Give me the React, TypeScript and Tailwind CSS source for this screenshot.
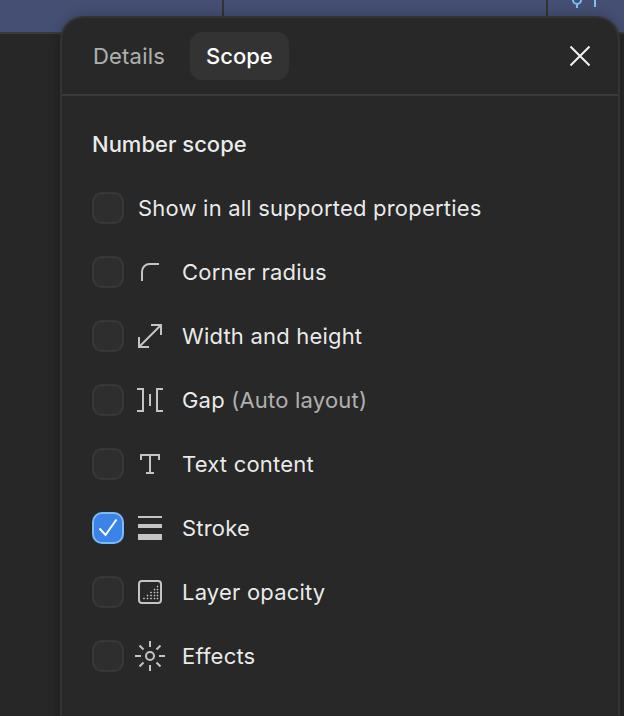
import React from "react";

const c = "#c4c4c4";
const Box = ({ children }: { children: React.ReactNode }) => (
  <svg width="32" height="32" viewBox="0 0 32 32" fill="none" className="shrink-0">{children}</svg>
);

const icons: Record<string, React.ReactNode> = {
  corner: <Box><path d="M8 25V15.5A7.5 7.5 0 0 1 15.5 8H25" stroke={c} strokeWidth="2" /></Box>,
  size: (
    <Box>
      <path d="M6 26L26 6M17 5h10v10M5 17v10h10" stroke={c} strokeWidth="2" />
    </Box>
  ),
  gap: (
    <Box>
      <path d="M3 5h6v22H3M29 5h-6v22h6M16 10v12" stroke={c} strokeWidth="2" />
    </Box>
  ),
  text: (
    <Box>
      <path d="M7 12V7h18v5M16 7v18M12 25h8" stroke={c} strokeWidth="2" />
    </Box>
  ),
  stroke: (
    <Box>
      <path d="M4 4h24v2H4zM4 12h24v4H4zM4 22h24v6H4z" fill={c} />
    </Box>
  ),
  opacity: (
    <Box>
      <rect x="5" y="5" width="22" height="22" rx="3" stroke={c} strokeWidth="2" />
      <path
        d="M9.500 22h1v1h-1zM13 22h1v1h-1zM16.500 22h1v1h-1zM20 22h1v1h-1zM23 22h1v1h-1zM13 19h1v1h-1zM16.500 19h1v1h-1zM20 19h1v1h-1zM23 19h1v1h-1zM16.500 16h1v1h-1zM20 16h1v1h-1zM23 16h1v1h-1zM20 13h1v1h-1zM23 13h1v1h-1zM23 10h1v1h-1z"
        fill={c}
        stroke={c}
        strokeWidth="0.6"
      />
    </Box>
  ),
  effects: (
    <Box>
      <circle cx="16" cy="16" r="4" stroke={c} strokeWidth="2" />
      <path
        d="M16 1v6M16 25v6M1 16h6M25 16h6M5.500 5.500l4 4M22.500 22.500l4 4M26.500 5.500l-4 4M9.500 22.500l-4 4"
        stroke={c}
        strokeWidth="2"
      />
    </Box>
  ),
};

function Check({ on }: { on?: boolean }) {
  if (on) {
    return (
      <div className="w-8 h-8 rounded-[10px] bg-[#3a83e8] border-2 border-[#7cb9f6] flex items-center justify-center shrink-0">
        <svg width="20" height="20" viewBox="0 0 20 20" fill="none">
          <path d="M1.500 10.500L7.500 17L18.500 1.500" stroke="#fff" strokeWidth="2" />
        </svg>
      </div>
    );
  }
  return <div className="w-8 h-8 rounded-[10px] bg-[#2e2e2e] border-2 border-[#383838] shrink-0" />;
}

const rows = [
  { icon: "corner", label: "Corner radius" },
  { icon: "size", label: "Width and height" },
  { icon: "gap", label: "Gap", extra: "(Auto layout)" },
  { icon: "text", label: "Text content" },
  { icon: "stroke", label: "Stroke", on: true },
  { icon: "opacity", label: "Layer opacity" },
  { icon: "effects", label: "Effects" },
];

export default function App() {
  return (
    <div className="relative w-[624px] h-[716px] overflow-hidden bg-[#272727] font-['Inter',sans-serif] text-[22px] tracking-[0.2px] text-[#ffffffeb]">
      <div className="h-[34px] bg-[#454f73] border-b-2 border-[#3a3a3a] flex">
        <div className="w-[224px] border-r-2 border-[#333]" />
        <div className="w-[324px] border-r-2 border-[#333]" />
        <svg width="60" height="12" viewBox="0 0 60 12" fill="none">
          <circle cx="29" cy="0" r="4" stroke="#7cc0f8" strokeWidth="2" />
          <path d="M29 4v4M47 0v7" stroke="#7cc0f8" strokeWidth="2" />
        </svg>
      </div>

      <div className="absolute left-[60px] top-4 w-[560px] h-[720px] bg-[#282828] rounded-t-[24px] border-t-2 border-l-2 border-r-2 border-[#333] shadow-[0_0_12px_rgba(0,0,0,0.25)]">
        <div className="h-[78px] border-b-2 border-[#3a3a3a] flex items-center pl-[15px] pr-[22px]">
          <div className="px-[16px] h-12 flex items-center text-[#ffffffa6]">Details</div>
          <div className="px-[16px] h-12 ml-[9px] flex items-center rounded-xl bg-[#333333] font-medium tracking-normal text-white">Scope</div>
          <button className="ml-auto w-8 h-8 flex items-center justify-center">
            <svg width="20" height="20" viewBox="0 0 20 20" fill="none">
              <path d="M0.500 0.500l19 19M19.500 0.500l-19 19" stroke="#f0f0f0" strokeWidth="2" />
            </svg>
          </button>
        </div>
        <div className="pl-[30px] pt-[32px]">
          <div className="h-8 flex items-center font-medium tracking-normal">Number scope</div>
          <div className="mt-4 h-16 flex items-center gap-[14px]">
            <Check />
            <span>Show in all supported properties</span>
          </div>
          {rows.map((r) => (
            <div key={r.label} className="h-16 flex items-center">
              <Check on={r.on} />
              <div className="ml-[10px]">{icons[r.icon]}</div>
              <span className="ml-4">
                {r.label}
                {r.extra && <span className="text-[#ffffffa6]"> {r.extra}</span>}
              </span>
            </div>
          ))}
        </div>
      </div>
    </div>
  );
}
